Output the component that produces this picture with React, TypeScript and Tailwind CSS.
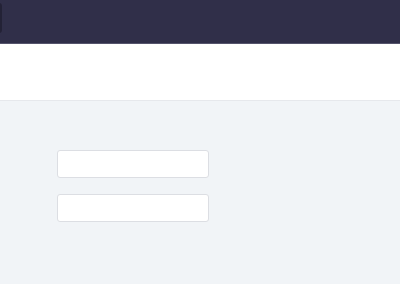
import React from "react";

export default function App() {
  return (
    <div className="flex h-[284px] w-[400px] flex-col overflow-hidden bg-[#f1f4f7] font-['Liberation_Sans',sans-serif]">
      {/* top bar */}
      <header className="flex h-[44px] shrink-0 items-start border-b border-[#55546c] bg-[#302f49] pt-[3px]">
        <div className="-ml-[6px] h-[30px] w-[8px] rounded-[3px] bg-[#232236]" />
      </header>

      {/* sub header */}
      <div className="h-[57px] shrink-0 border-b border-[#e6e8ec] bg-white" />

      {/* form */}
      <div className="flex flex-col gap-4 pl-[57px] pt-[49px]">
        <input
          type="text"
          className="h-[28px] w-[152px] rounded-[3px] border border-[#dcdee3] bg-white px-2 text-sm outline-none"
        />
        <input
          type="text"
          className="h-[28px] w-[152px] rounded-[3px] border border-[#dcdee3] bg-white px-2 text-sm outline-none"
        />
      </div>
    </div>
  );
}
